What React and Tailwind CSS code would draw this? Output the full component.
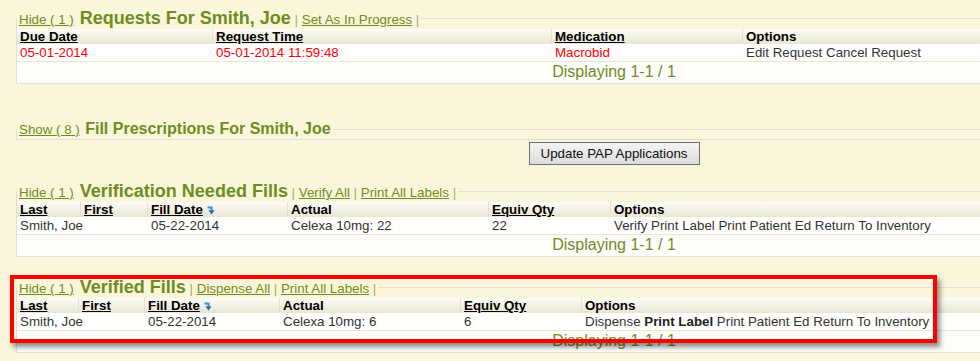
import React from "react";

const requestCols = [
  { label: "Due Date", w: "w-[195px]", sort: true },
  { label: "Request Time", w: "w-[339px]", sort: true },
  { label: "Medication", w: "w-[191px]", sort: true },
  { label: "Options", w: "flex-1" },
];

const verifyCols = [
  { label: "Last", w: "w-[63px]", sort: true },
  { label: "First", w: "w-[67px]", sort: true },
  { label: "Fill Date", w: "w-[140px]", sort: true, icon: true },
  { label: "Actual", w: "w-[201px]" },
  { label: "Equiv Qty", w: "w-[122px]", sort: true },
  { label: "Options", w: "flex-1" },
];

const verifiedCols = [
  { label: "Last", w: "w-[61px]", sort: true },
  { label: "First", w: "w-[66px]", sort: true },
  { label: "Fill Date", w: "w-[135px]", sort: true, icon: true },
  { label: "Actual", w: "w-[181px]" },
  { label: "Equiv Qty", w: "w-[121px]", sort: true },
  { label: "Options", w: "flex-1" },
];

function SortIcon() {
  return (
    <svg
      width="8"
      height="9"
      viewBox="0 0 8 9"
      className="inline-block ml-[4px] align-[-1px]"
    >
      <path d="M0.5 1.5H4.6V4.5" fill="none" stroke="#3b8fdc" strokeWidth="2" />
      <path d="M1.4 4.3H7.6L4.5 8.6Z" fill="#1c6cc2" />
    </svg>
  );
}

function Legend({ toggle, title, size, links = [] }) {
  return (
    <legend className={`px-[2px] whitespace-nowrap ${size}`}>
      <a className="text-[13.33px] leading-none text-[#6b8e23] underline">
        {toggle}
      </a>{" "}
      <span className="ml-[1px] font-bold text-[#6b8e23]">{title}</span>
      {links.length > 0 && (
        <span className="text-[13.33px] leading-none">
          {" "}
          <span className="text-[#9db06a]">|</span>
          {links.map((l) => (
            <React.Fragment key={l}>
              {" "}
              <a className="text-[#6b8e23] underline">{l}</a>{" "}
              <span className="text-[#9db06a]">|</span>
            </React.Fragment>
          ))}
        </span>
      )}
    </legend>
  );
}

function Grid({ cols, rows }) {
  return (
    <div>
      <div className="flex h-[15px] bg-linear-to-b from-[#fdfcf7] to-[#e8e5d2] font-bold text-black">
        {cols.map((c, i) => (
          <div
            key={c.label}
            className={`${c.w} shrink-0 pl-[3px] ${i ? "border-l border-[#e2dfcd]" : ""}`}
          >
            <span className={c.sort ? "underline" : ""}>{c.label}</span>
            {c.icon && <SortIcon />}
          </div>
        ))}
      </div>
      {rows.map((r, ri) => (
        <div
          key={ri}
          className="flex h-[18px] pt-[1px] bg-white border-b border-[#ece6ca]"
        >
          {cols.map((c, i) => (
            <div
              key={c.label}
              className={`${c.w} shrink-0 pl-[3px] whitespace-nowrap ${i ? "border-l border-transparent" : ""} ${r.red && i < 3 ? "text-[#ff0000]" : "text-[#333]"}`}
            >
              {r.cells[i]}
            </div>
          ))}
        </div>
      ))}
      <div className="h-[21px] pt-[1px] bg-[#fefdf9] text-center text-[16px] text-[#6f8c28]">
        Displaying 1-1 / 1
      </div>
    </div>
  );
}

export default function App() {
  return (
    <div className="relative w-[980px] h-[361px] overflow-hidden bg-[#fbf6d9] font-['Liberation_Sans',Arial,sans-serif] text-[13.33px] leading-[normal]">
      <div className="w-[1228px] px-4">
        <fieldset className="mt-[7px] border border-[#dfdfdc]">
          <Legend
            toggle="Hide ( 1 )"
            title="Requests For Smith, Joe"
            size="text-[18px] leading-[22px]"
            links={["Set As In Progress"]}
          />
          <Grid
            cols={requestCols}
            rows={[
              {
                red: true,
                cells: [
                  "05-01-2014",
                  "05-01-2014 11:59:48",
                  "Macrobid",
                  "Edit Request Cancel Request",
                ],
              },
            ]}
          />
        </fieldset>

        <fieldset className="mt-[35px] border border-[#dfdfdc]">
          <Legend
            toggle="Show ( 8 )"
            title="Fill Prescriptions For Smith, Joe"
            size="text-[16px] leading-[20px]"
          />
        </fieldset>

        <div className="mt-[2px] flex justify-center">
          <button className="w-[171px] h-[23px] border border-[#707070] bg-linear-to-b from-[#f4f4f4] to-[#dcdcdc] text-[13.33px] text-[#111]">
            Update PAP Applications
          </button>
        </div>

        <fieldset className="mt-[15px] border border-[#dfdfdc]">
          <Legend
            toggle="Hide ( 1 )"
            title="Verification Needed Fills"
            size="text-[18px] leading-[22px]"
            links={["Verify All", "Print All Labels"]}
          />
          <Grid
            cols={verifyCols}
            rows={[
              {
                cells: [
                  "Smith, Joe",
                  "",
                  "05-22-2014",
                  "Celexa 10mg: 22",
                  "22",
                  "Verify Print Label Print Patient Ed Return To Inventory",
                ],
              },
            ]}
          />
        </fieldset>

        <fieldset className="mt-[19px] border border-[#dfdfdc]">
          <Legend
            toggle="Hide ( 1 )"
            title="Verified Fills"
            size="text-[18px] leading-[22px]"
            links={["Dispense All", "Print All Labels"]}
          />
          <Grid
            cols={verifiedCols}
            rows={[
              {
                cells: [
                  "Smith, Joe",
                  "",
                  "05-22-2014",
                  "Celexa 10mg: 6",
                  "6",
                  <>
                    Dispense <b className="text-[#222]">Print Label</b> Print
                    Patient Ed Return To Inventory
                  </>,
                ],
              },
            ]}
          />
        </fieldset>
      </div>

      {/* red highlight drawn over the verified fills block */}
      <div className="absolute left-[10px] top-[275px] w-[927px] h-[68px] border-4 border-[#ff0000] shadow-[3px_4px_5px_rgba(0,0,0,0.45)]" />
    </div>
  );
}
